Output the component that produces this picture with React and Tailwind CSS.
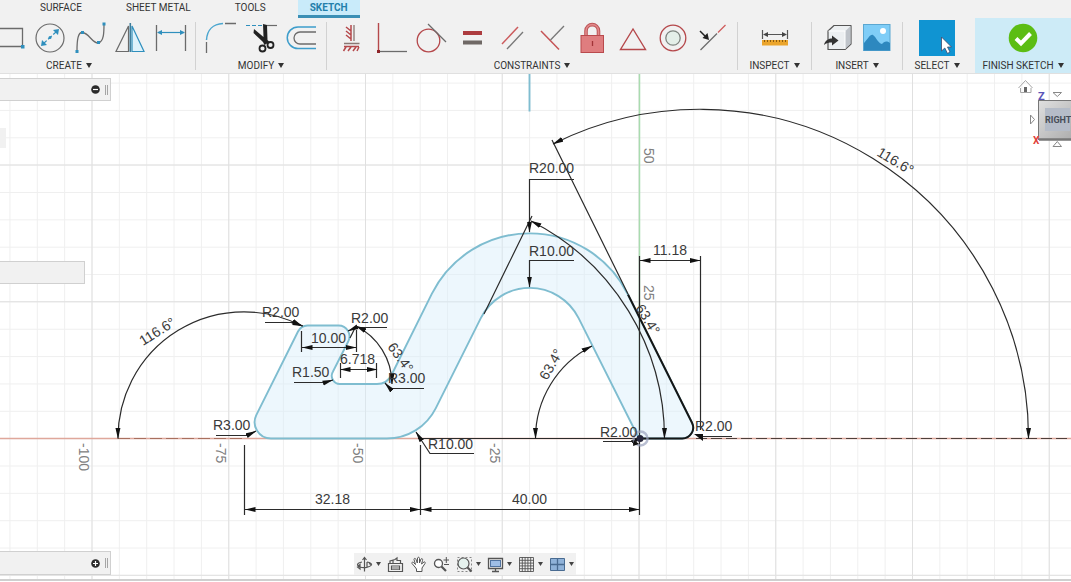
import React from "react";

const RED = "#b5484b";
const GRAY = "#6b6b6b";
const BLUE = "#2f8fbd";

function Caret() {
  return (
    <svg width="6" height="5" viewBox="0 0 6 5" className="shrink-0" aria-hidden="true">
      <path d="M0 0H6L3 5Z" fill="#333" />
    </svg>
  );
}

function Tool({ label, children }) {
  return (
    <button type="button" aria-label={label} className="h-10 w-10 shrink-0">
      <svg width="40" height="40" viewBox="0 0 40 40" fill="none">
        {children}
      </svg>
    </button>
  );
}

function Group({ label, className, iconsClass = "justify-center", children }) {
  return (
    <section className={"flex shrink-0 flex-col overflow-hidden " + className}>
      <div className={"flex h-10 " + iconsClass}>{children}</div>
      <button
        type="button"
        className="flex h-[15px] items-center justify-center gap-1 whitespace-nowrap text-[10px] leading-[15px] text-[#333]"
      >
        {label}
        <Caret />
      </button>
    </section>
  );
}

function Divider() {
  return <div className="mt-1 h-12 w-px shrink-0 bg-[#d2d2d2]" />;
}

function Tab({ active, children }) {
  return (
    <a
      href="#"
      className={
        active
          ? "flex h-full items-start border-b-[3px] border-[#3b8fb5] bg-[#c9ebfa] px-3 font-bold text-[#2380ab]"
          : "flex h-full items-start px-3 text-[#333]"
      }
    >
      {children}
    </a>
  );
}

function Toolbar() {
  return (
    <header className="overflow-hidden border-b border-[#e0e0e0] bg-[#f1f1f1] font-[Roboto,sans-serif]">
      <nav className="flex h-[18px] gap-5 pl-7 text-[10px] leading-4">
        <Tab>SURFACE</Tab>
        <Tab>SHEET METAL</Tab>
        <Tab>TOOLS</Tab>
        <Tab active>SKETCH</Tab>
      </nav>
      <div className="flex">
        <Group label="CREATE" className="-ml-[52px] w-[247px] pr-[5px]" iconsClass="justify-end">
          <Tool label="Rectangle">
            <path d="M0 10.5H32.5V28.5H0" stroke={GRAY} strokeWidth="1.3" />
            <rect x="31" y="27" width="3.5" height="3.5" fill={BLUE} />
          </Tool>
          <Tool label="Circle">
            <circle cx="20" cy="20" r="14" stroke={GRAY} strokeWidth="1.2" />
            <path d="M13 26L27 13" stroke={BLUE} strokeWidth="1.2" strokeDasharray="5 2" />
            <path d="M29 11L28 17L23 12ZM11 28L12 22L17 27Z" fill={BLUE} />
            <circle cx="20" cy="19.5" r="1.5" fill={BLUE} />
          </Tool>
          <Tool label="Spline">
            <path d="M7 33C7 22 8 14 12.500 14.500C19 15 22 25 28 25C34 24 34 14 34 6" stroke={GRAY} strokeWidth="1.3" />
            <path d="M5.500 32h3v3h-3zM11 13h3v3h-3zM27 23h3v3h-3zM32.500 4.500h3v3h-3z" fill={BLUE} />
          </Tool>
          <Tool label="Mirror">
            <path d="M18.500 8V33.500H6Z" stroke={GRAY} strokeWidth="1.2" />
            <path d="M22 8V33.500H34Z" stroke={BLUE} strokeWidth="1.2" fill="#dff2fb" />
            <path d="M20.300 5V34" stroke="#3f7e9c" strokeWidth="1.600" />
          </Tool>
          <Tool label="Sketch Dimension">
            <path d="M6.500 7V33M35.500 7V33" stroke={GRAY} strokeWidth="1.300" />
            <path d="M8 14.500H34" stroke={BLUE} strokeWidth="1.200" />
            <path d="M7 14.500L12 12V17ZM35 14.500L30 12V17Z" fill={BLUE} />
          </Tool>
        </Group>
        <Divider />
        <Group label="MODIFY" className="w-[130px]">
          <Tool label="Fillet">
            <path d="M5.500 35V24M24 5.500H35" stroke={GRAY} strokeWidth="1.300" />
            <path d="M5.500 22C6 12 12 6 22 5.500" stroke="#4ba6cf" strokeWidth="1.500" />
          </Tool>
          <Tool label="Trim">
            <path d="M5 7.500H22" stroke={BLUE} strokeWidth="1.200" strokeDasharray="4 2" />
            <path d="M26 7.500H36" stroke={GRAY} strokeWidth="1.200" />
            <path d="M22 6L26 7L26.500 22L28.500 24L23.500 27L22 24L12.500 15L13 11L22.500 19Z" fill="#222" />
            <circle cx="21.500" cy="30.500" r="3" stroke="#222" strokeWidth="1.800" />
            <circle cx="29.500" cy="27" r="3" stroke="#222" strokeWidth="1.800" />
          </Tool>
          <Tool label="Offset">
            <path d="M35 9H17A10.500 10.500 0 0 0 17 30.500H35" stroke="#3d9dcb" strokeWidth="1.500" />
            <path d="M35 14H19A6 6 0 0 0 19 26H35" stroke={GRAY} strokeWidth="1.300" />
          </Tool>
        </Group>
        <Divider />
        <Group label="CONSTRAINTS" className="w-[410px]">
          <Tool label="Horizontal/Vertical">
            <path d="M19 7V23M14 9L19 13M14 13L19 17M14 17L19 21M14 29L11.500 33M19 29L16 33M24 29L21 33M27 29L25 33M12 28.500H27" stroke={RED} strokeWidth="1.500" />
            <path d="M22 7V23M12 25.500H27.500" stroke="#8a7773" strokeWidth="1.300" />
          </Tool>
          <Tool label="Coincident">
            <path d="M6.500 5V33" stroke={RED} strokeWidth="1.400" />
            <path d="M8 33.500H35" stroke={GRAY} strokeWidth="1.300" />
            <rect x="5" y="32" width="3" height="3" fill="#8e2529" />
          </Tool>
          <Tool label="Tangent">
            <circle cx="16.500" cy="22.500" r="11.300" stroke={RED} strokeWidth="1.300" />
            <path d="M16 6L34 24" stroke={GRAY} strokeWidth="1.300" />
          </Tool>
          <Tool label="Equal">
            <rect x="11" y="13" width="19" height="4" fill="#ad3c3f" />
            <rect x="11" y="22.500" width="19" height="4" fill="#6f6865" />
          </Tool>
          <Tool label="Parallel">
            <path d="M10 26L26 9" stroke="#cc5b5d" strokeWidth="1.500" />
            <path d="M15 31L31 14" stroke="#777" strokeWidth="1.300" />
          </Tool>
          <Tool label="Perpendicular">
            <path d="M9 13L27 31.500" stroke="#c55355" strokeWidth="1.500" />
            <path d="M18.500 22L32 8" stroke="#777" strokeWidth="1.300" />
          </Tool>
          <Tool label="Fix/Unfix">
            <path d="M14 18V13C14 4.500 26.500 4.500 26.500 13V18" stroke="#bd5558" strokeWidth="3.600" />
            <path d="M14 18V13C14 4.500 26.500 4.500 26.500 13V18" stroke="#e28a8b" strokeWidth="1.600" />
            <rect x="9" y="17.500" width="22.500" height="17" fill="#df7d7f" stroke="#b94a4d" />
            <path d="M20.500 23V28" stroke="#a23437" strokeWidth="1.300" />
          </Tool>
          <Tool label="Midpoint">
            <path d="M21 11L8.500 31.500H33.500Z" stroke={RED} strokeWidth="1.400" />
          </Tool>
          <Tool label="Concentric">
            <circle cx="21" cy="20" r="12.800" stroke={RED} strokeWidth="1.300" />
            <circle cx="21" cy="20" r="7.200" stroke="#7e8580" strokeWidth="1.300" fill="#e4efe9" />
          </Tool>
          <Tool label="Collinear">
            <path d="M8.500 32L25 15.500" stroke={GRAY} strokeWidth="1.300" />
            <path d="M26 14.500L33.500 7" stroke="#cf5c5c" strokeWidth="1.300" />
            <path d="M8 13L13 18" stroke="#222" strokeWidth="1.500" />
            <path d="M17 22L10.500 20L15.500 15Z" fill="#222" />
          </Tool>
        </Group>
        <Divider />
        <Group label="INSPECT" className="w-[73px]">
          <Tool label="Measure">
            <path d="M7.500 12V21M32.500 12V21M9 16.500H31" stroke="#555" strokeWidth="1.200" />
            <path d="M8 16.500L13 14V19ZM32 16.500L27 14V19Z" fill="#444" />
            <rect x="7" y="22" width="26" height="5.500" fill="#eba52c" />
            <path d="M9.500 22v2M12.500 22v2M15.500 22v2M18.500 22v2M21.500 22v2M24.500 22v2M27.500 22v2M30.500 22v2" stroke="#8a5a0e" />
          </Tool>
        </Group>
        <Divider />
        <Group label="INSERT" className="w-[90px]">
          <Tool label="Insert Derive">
            <path d="M11 13L17 7.500H34V26L28 31.500H11Z" fill="#eceff1" stroke="#555" strokeWidth="1.200" strokeLinejoin="round" />
            <path d="M28 13.500L33.500 8V26L28 31Z" fill="#bfc4ca" />
            <path d="M11.500 13H28V31" stroke="#fff" />
            <path d="M7 27C8 22 12 20.500 15 20.500V17.500L21.500 22.500L15 27.500V24.500C12 24.500 9 25 7 27Z" fill="#333" />
          </Tool>
          <Tool label="Canvas">
            <rect x="6.500" y="6.500" width="26.500" height="26" fill="#7fcdf7" stroke="#5ba7d1" />
            <path d="M7 25C11 21 13 16 16 17C19 19 21 25 25 26C27 24 29 22 33 25V32.500H7Z" fill="#2d88bf" />
            <circle cx="26" cy="13" r="3" fill="#fff" />
          </Tool>
        </Group>
        <Divider />
        <Group label="SELECT" className="w-[72px] pr-1">
          <Tool label="Select">
            <rect x="2" y="2" width="36" height="36" fill="#1094d2" />
            <path d="M24.500 19V33L27.800 30L30.500 35.500L33 34L30.500 29H34.500Z" fill="#fff" stroke="#40496b" strokeWidth="0.800" />
          </Tool>
        </Group>
        <Group label="FINISH SKETCH" className="w-24 grow bg-[#cdebf7]">
          <Tool label="Finish">
            <circle cx="20" cy="20" r="14.300" fill="#5cbd14" />
            <path d="M13 20.500L18 25.500L27.500 15.500" stroke="#fff" strokeWidth="4" />
          </Tool>
        </Group>
      </div>
    </header>
  );
}

const BLUE_EDGE = "#7fbdd0";

// Leader lines and dimension lines that end in one arrow.
const leaders = [
  "M574 179.500H529.500V232",
  "M574 260.500H529.500V287",
  "M474 453.500H430L416 432",
  "M265 322.500H293L303 326",
  "M387 327.500H356L348 331",
  "M294 382.500H325L333 380",
  "M424 388.500H390L385 383",
  "M216 435.500H247L256 431",
  "M603 441.500H634L641 437",
];

const doubles = [
  "M640 260.500H700",
  "M245 509.500H420",
  "M421 509.500H639",
  "M302 347.500H356",
  "M340 369.500H377",
  "M118 438.500A126 126 0 0 1 302 326",
  "M553 144A328.500 328.500 0 0 1 1028.500 438.500",
  "M531 221A244 244 0 0 1 664.500 438.500",
  "M535.500 438.500A103.500 103.500 0 0 1 592 346",
  "M356 326A65 65 0 0 1 392 384",
];

const labels = [
  [529, 173, "R20.00"],
  [529, 256, "R10.00"],
  [653, 255, "11.18"],
  [315, 504, "32.18"],
  [512, 504, "40.00"],
  [428, 449, "R10.00"],
  [262, 317, "R2.00"],
  [351, 323, "R2.00"],
  [292, 377, "R1.50"],
  [388, 383, "R3.00"],
  [213, 430, "R3.00"],
  [600, 437, "R2.00"],
  [695, 431, "R2.00"],
  [311, 343, "10.00"],
  [340, 364, "6.718"],
  [143, 346, "116.6°", -32],
  [876, 155, "116.6°", 31],
  [547, 381, "63.4°", -60],
  [635, 308, "63.4°", 58],
  [387, 347, "63.4°", 54],
];

const ticks = [
  [644, 148, "50"],
  [644, 285, "25"],
  [79, 443, "-100"],
  [216, 443, "-75"],
  [353, 443, "-50"],
  [490, 443, "-25"],
];

function Sketch() {
  return (
    <svg className="absolute inset-0 h-full w-full" fill="none" aria-label="Sketch">
      <defs>
        <pattern id="minor" x="9.450" y="8.600" width="27.350" height="27.350" patternUnits="userSpaceOnUse">
          <path d="M0.500 0V27.350M0 0.500H27.350" stroke="#efefef" />
        </pattern>
        <pattern id="major" x="91.500" y="90.500" width="136.750" height="136.750" patternUnits="userSpaceOnUse">
          <path d="M0.500 0V136.750M0 0.500H136.750" stroke="#e0e0e0" />
        </pattern>
        <marker id="arrow" markerUnits="userSpaceOnUse" markerWidth="11" markerHeight="6" refX="10.500" refY="3" orient="auto-start-reverse">
          <path d="M0 0.500L11 3L0 5.500Z" fill="#111" />
        </marker>
      </defs>
      <rect width="100%" height="100%" fill="url(#minor)" />
      <rect width="100%" height="100%" fill="url(#major)" />
      <g transform="translate(0 -74)">
        <path d="M0 438.500H5000" stroke="#dfa79b" strokeWidth="1.300" />
        <path d="M118 438.500H244" stroke="#a8705f" strokeDasharray="12 4" />
        <path d="M639.500 73V438" stroke="#a9dcaf" strokeWidth="1.500" />

        <path
          d="M271 438.500A16.400 16.400 0 0 1 256.400 414.800L298 331.500A10.900 10.900 0 0 1 307.500 325.500H338.500A10.900 10.900 0 0 1 348.200 341.500L333 371.500A8.200 8.200 0 0 0 340.500 384H376.500A16.400 16.400 0 0 0 391.500 375L431.900 293.700A109.400 109.400 0 0 1 627.500 293.700L692 422.700A10.900 10.900 0 0 1 682.200 438.500H639L578.600 318.100A54.700 54.700 0 0 0 480.800 318.100L435.700 408.300A54.700 54.700 0 0 1 386.800 438.500Z"
          fill="#d6edfb"
          fillOpacity="0.450"
          stroke={BLUE_EDGE}
          strokeWidth="1.900"
        />
        <path d="M529.500 73V111.500" stroke={BLUE_EDGE} strokeWidth="1.900" />

        <g stroke="#2b2b2b" strokeWidth="1.200">
          <path d="M552 140L628 294M532 216L484 314" />
          <path d="M639.500 256V515M700.500 256V430M244.500 445V515M420.500 445V515" />
          <path d="M301.500 331V352M356.500 330V352M340.500 363V378M376.500 363V378M356 326L350 338" />
          <path d="M418 438.500H640M700 436.500H732" />
          <path d="M696 438.500H5000" strokeDasharray="11 4" stroke="#4f403b" />
          {leaders.map((d) => (
            <path key={d} d={d} markerEnd="url(#arrow)" />
          ))}
          {doubles.map((d) => (
            <path key={d} d={d} markerStart="url(#arrow)" markerEnd="url(#arrow)" />
          ))}
        </g>
        <path d="M628 294.500L692 422.700A10.900 10.900 0 0 1 682.200 438.500H640" stroke="#161616" strokeWidth="2" />
        <path d="M694 434L703 434L703 441Z" fill="#111" />
        <circle cx="640.500" cy="438.500" r="7" stroke="#9aa3bd" strokeWidth="2.500" strokeOpacity="0.700" />
        <circle cx="640" cy="438.500" r="3.500" fill="#26263c" />
        <path d="M633 446L634 440L639 444Z" fill="#111" />

        <g className="font-['Liberation_Sans',sans-serif] text-[14px]">
          {labels.map(([x, y, text, angle = 0]) => (
            <text key={x + "," + y} x={x} y={y} fill="#3a3a3a" transform={`rotate(${angle} ${x} ${y})`}>
              {text}
            </text>
          ))}
          {ticks.map(([x, y, text]) => (
            <text key={x + "," + y} x={x} y={y} fill="#808080" transform={`rotate(90 ${x} ${y})`}>
              {text}
            </text>
          ))}
        </g>
      </g>
    </svg>
  );
}

function ViewCube() {
  return (
    <svg width="60" height="78" viewBox="1011 74 60 78" fill="none" className="absolute right-0 top-0" aria-label="View cube">
      <defs>
        <linearGradient id="face" x1="0" y1="0" x2="1" y2="1">
          <stop offset="0" stopColor="#e0e0e0" />
          <stop offset="1" stopColor="#a9a9a9" />
        </linearGradient>
      </defs>
      <path d="M1018.500 88L1025.500 80.500L1032.500 88M1020.500 88V92.500H1031V88" stroke="#a5a5a5" />
      <rect x="1024" y="87" width="3" height="5" fill="#666" />
      <path d="M1053 92.500H1061.500L1057.300 96.500ZM1053 146.500H1061.500L1057.300 141.500ZM1030.500 115V124L1034.500 119.500Z" stroke="#888" fill="#fff" />
      <rect x="1038.500" y="100.500" width="40" height="39" fill="url(#face)" stroke="#777" />
      <path d="M1039 139.500H1071" stroke="#777" strokeWidth="2.500" />
      <rect x="1045" y="108" width="25" height="23" fill="#b5bcc8" />
      <g className="font-[Roboto,sans-serif] font-bold">
        <text x="1045" y="123" fill="#474d57" className="text-[9px]">RIGHT</text>
        <text x="1038" y="100" fill="#5a55b8" className="text-[11px]">Z</text>
        <text x="1033" y="144" fill="#e0413a" className="text-[10px]">X</text>
      </g>
    </svg>
  );
}

function Panel({ className, icon, label }) {
  return (
    <div className={"absolute left-0 flex items-center justify-end gap-1 border border-l-0 border-[#d0d0d0] bg-[#f1f1f1] pr-0.5 " + className}>
      {icon && (
        <>
          <button type="button" aria-label={label}>
            <svg width="9" height="9" viewBox="0 0 9 9">
              <circle cx="4.500" cy="4.500" r="4.300" fill="#2b2b2b" />
              <path d={icon} stroke="#fff" strokeWidth="1.200" />
            </svg>
          </button>
          <div className="ml-px h-2.5 w-[3px] border-x border-[#a5a5a5]" />
        </>
      )}
    </div>
  );
}

function Nav({ label, caret, children }) {
  return (
    <button type="button" aria-label={label} className="flex items-center gap-[3px]">
      <svg width="17" height="17" viewBox="0 0 17 17" fill="none" stroke="#555">
        {children}
      </svg>
      {caret && (
        <svg width="5" height="4" viewBox="0 0 5 4">
          <path d="M0 0H5L2.500 4Z" fill="#444" />
        </svg>
      )}
    </button>
  );
}

function NavBar() {
  return (
    <div className="absolute bottom-1 left-[354px] flex h-[22px] items-center gap-1.5 bg-[#f1f1f1] px-0.5">
      <Nav label="Orbit" caret>
        <path d="M8.500 1.500V15.500M6.500 4L8.500 1.500L10.500 4M6 6C1 7 0 9 4 11C8 12.500 14 11 15.500 9C16 7 12 6 11 6M4 8.500V13L1.500 11ZM11 6V11M13 7.500L16 9" strokeWidth="1.200" />
      </Nav>
      <Nav label="Look At">
        <path d="M1.500 7.500H15.500V15.500H1.500ZM4.500 10H12.500V13.500H4.500ZM3 7V5L8 3.500L10 2V4.500H13.500V7M6 4V7" strokeWidth="1.200" />
        <rect x="5" y="10.500" width="7" height="3" fill="#aaa" stroke="none" />
      </Nav>
      <Nav label="Pan">
        <path d="M5 11L2 7.500C1.500 6 3 5.500 4 7L5.500 8.500L4 3.500C4 2 5.500 2 6 3.500L7.300 7L7.500 2C8 0.800 9.500 1 9.500 2.500V7L11 3C12 2 13 3 12.500 4.500L11.500 8L14 6C15 5.500 15.500 6.500 15 7.500L12 12V15.500H6.500V13Z" fill="#fff" />
      </Nav>
      <Nav label="Zoom">
        <circle cx="5.500" cy="7.500" r="4" strokeWidth="1.300" fill="#fff" />
        <path d="M8.500 10.500L13 15" strokeWidth="2.200" />
        <path d="M10.500 4H16M13.300 1V7M11 8.500H16" />
      </Nav>
      <Nav label="Fit" caret>
        <path d="M1.500 1.500H15.500V15.500H1.500Z" strokeDasharray="2 2" stroke="#888" />
        <circle cx="7.500" cy="7.500" r="5.500" fill="#e5f2ee" strokeWidth="1.200" />
        <path d="M11.500 11.500L15.500 15.500" strokeWidth="2.200" />
      </Nav>
      <Nav label="Display Settings" caret>
        <path d="M1.500 2.500H15.500V12.500H1.500ZM8.500 13V15.500M5 15.500H12" strokeWidth="1.300" />
        <rect x="3.500" y="4.500" width="10" height="6" fill="#9fbee6" stroke="#5274a1" />
      </Nav>
      <Nav label="Grid and Snaps" caret>
        <path d="M1.500 1.500H15.500V15.500H1.500ZM4.300 1V16M7.100 1V16M9.900 1V16M12.700 1V16M1 4.300H16M1 7.100H16M1 9.900H16M1 12.700H16" strokeWidth="0.900" />
      </Nav>
      <Nav label="Viewports" caret>
        <path d="M1.500 2.500H15.500V14.500H1.500Z" fill="#8fb2d9" stroke="#496b91" />
        <path d="M8.500 3V14M2 8.500H15" stroke="#496b91" strokeWidth="1.300" />
      </Nav>
    </div>
  );
}

export default function App() {
  return (
    <div className="flex min-h-screen flex-col bg-white">
      <Toolbar />
      <main className="relative mb-px grow overflow-hidden border-b-2 border-[#cfcfcf]">
        <Sketch />
        <Panel className="top-1 h-[23px] w-[111px]" icon="M2 4.500H7" label="Collapse browser" />
        <Panel className="top-[54px] h-5 w-1.5 border-transparent" />
        <Panel className="top-[187px] h-[23px] w-[85px]" />
        <Panel className="bottom-1 h-6 w-[111px]" icon="M2 4.500H7M4.500 2V7" label="Expand comments" />
        <ViewCube />
        <NavBar />
      </main>
    </div>
  );
}
